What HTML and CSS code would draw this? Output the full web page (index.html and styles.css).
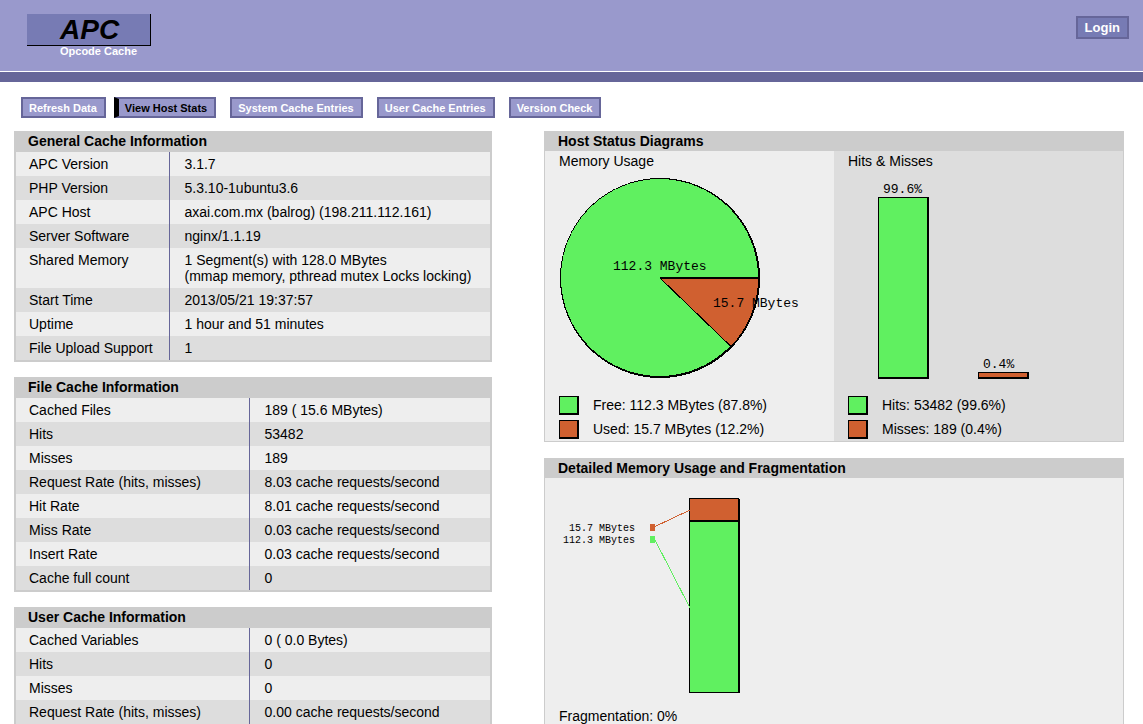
FILE: index.html
```html
<!DOCTYPE html>
<html lang="en">
<head>
<meta charset="utf-8">
<title>APC Opcode Cache</title>
<link rel="stylesheet" href="styles.css">
</head>
<body>
<header class="head">
  <div class="brand">
    <h1 class="logo">APC</h1>
    <div class="tagline">Opcode Cache</div>
  </div>
  <button class="login" type="button">Login</button>
</header>
<nav class="menu">
  <a class="tab" href="#refresh">Refresh Data</a>
  <a class="tab tab-active" href="#host">View Host Stats</a>
  <a class="tab" href="#system">System Cache Entries</a>
  <a class="tab" href="#user">User Cache Entries</a>
  <a class="tab" href="#version">Version Check</a>
</nav>
<main class="content">
  <div class="column info-column">
    <section class="info">
      <h2 class="title">General Cache Information</h2>
      <table class="facts facts-narrow">
        <tr><th scope="row">APC Version</th><td>3.1.7</td></tr>
        <tr><th scope="row">PHP Version</th><td>5.3.10-1ubuntu3.6</td></tr>
        <tr><th scope="row">APC Host</th><td>axai.com.mx (balrog) (198.211.112.161)</td></tr>
        <tr><th scope="row">Server Software</th><td>nginx/1.1.19</td></tr>
        <tr><th scope="row">Shared Memory</th><td>1 Segment(s) with 128.0 MBytes<br>(mmap memory, pthread mutex Locks locking)</td></tr>
        <tr><th scope="row">Start Time</th><td>2013/05/21 19:37:57</td></tr>
        <tr><th scope="row">Uptime</th><td>1 hour and 51 minutes</td></tr>
        <tr><th scope="row">File Upload Support</th><td>1</td></tr>
      </table>
    </section>
    <section class="info">
      <h2 class="title">File Cache Information</h2>
      <table class="facts">
        <tr><th scope="row">Cached Files</th><td>189 ( 15.6 MBytes)</td></tr>
        <tr><th scope="row">Hits</th><td>53482</td></tr>
        <tr><th scope="row">Misses</th><td>189</td></tr>
        <tr><th scope="row">Request Rate (hits, misses)</th><td>8.03 cache requests/second</td></tr>
        <tr><th scope="row">Hit Rate</th><td>8.01 cache requests/second</td></tr>
        <tr><th scope="row">Miss Rate</th><td>0.03 cache requests/second</td></tr>
        <tr><th scope="row">Insert Rate</th><td>0.03 cache requests/second</td></tr>
        <tr><th scope="row">Cache full count</th><td>0</td></tr>
      </table>
    </section>
    <section class="info">
      <h2 class="title">User Cache Information</h2>
      <table class="facts">
        <tr><th scope="row">Cached Variables</th><td>0 ( 0.0 Bytes)</td></tr>
        <tr><th scope="row">Hits</th><td>0</td></tr>
        <tr><th scope="row">Misses</th><td>0</td></tr>
        <tr><th scope="row">Request Rate (hits, misses)</th><td>0.00 cache requests/second</td></tr>
      </table>
    </section>
  </div>
  <div class="column graph-column">
    <section class="graph">
      <h2 class="title">Host Status Diagrams</h2>
      <div class="halves">
        <div class="half">
          <div class="caption">Memory Usage</div>
          <svg class="chart" width="260" height="221" viewBox="0 0 260 221" role="img" aria-label="Memory usage pie chart">
            <circle cx="101" cy="106" r="100" fill="#000"/>
            <circle cx="100.5" cy="105.5" r="98.5" fill="#60f060"/>
            <path d="M101 106H199A98.5 98.5 0 0 1 171.500 174.500Z" fill="#d06030"/>
            <path d="M101 106L172.500 175" stroke="#000" fill="none"/>
            <path d="M101 106H201" stroke="#000" stroke-width="2"/>
            <text class="pixel" x="54" y="98">112.3 MBytes</text>
            <text class="pixel" x="154" y="135">15.7 MBytes</text>
          </svg>
          <div class="legend"><span class="swatch free"></span>Free: 112.3 MBytes (87.8%)</div>
          <div class="legend"><span class="swatch used"></span>Used: 15.7 MBytes (12.2%)</div>
        </div>
        <div class="half half-dark">
          <div class="caption">Hits &amp; Misses</div>
          <svg class="chart" width="260" height="221" viewBox="0 0 260 221" role="img" aria-label="Hits and misses bar chart">
            <path d="M30 25h51v182h-51z"/>
            <path d="M31 26h48v179h-48z" fill="#60f060"/>
            <path d="M130 200h51v7h-51z"/>
            <path d="M131 201h48v4h-48z" fill="#d06030"/>
            <text class="pixel" x="35" y="21">99.6%</text>
            <text class="pixel" x="135" y="196">0.4%</text>
          </svg>
          <div class="legend"><span class="swatch free"></span>Hits: 53482 (99.6%)</div>
          <div class="legend"><span class="swatch used"></span>Misses: 189 (0.4%)</div>
        </div>
      </div>
    </section>
    <section class="graph graph-last">
      <h2 class="title">Detailed Memory Usage and Fragmentation</h2>
      <div class="half">
        <svg class="chart" width="260" height="230" viewBox="0 0 260 230" role="img" aria-label="Memory segments">
          <path d="M130 20h50v1h1v194h-51z"/>
          <path d="M131 21h48v21h-48zM91 46h5v7h-5z" fill="#d06030"/>
          <path d="M131 44h48v170h-48zM91 58h5v7h-5z" fill="#60f060"/>
          <path d="M95 49L131 32" stroke="#d06030"/>
          <path d="M95 60L131 130" stroke="#60f060"/>
          <text class="pixel-small" x="10" y="53">15.7 MBytes</text>
          <text class="pixel-small" x="4" y="65">112.3 MBytes</text>
        </svg>
        <div class="fragmentation">Fragmentation: 0%</div>
      </div>
    </section>
  </div>
</main>
</body>
</html>
```
FILE: styles.css
```css
* { box-sizing: border-box; }
body {
  margin: 0;
  height: 100vh;
  overflow: hidden;
  display: flex;
  flex-direction: column;
  background: #fff;
  color: #000;
  font: 14px/16px "Liberation Sans", Arial, sans-serif;
}
.head {
  flex: none;
  display: flex;
  justify-content: space-between;
  align-items: flex-start;
  height: 82px;
  padding: 14px 14px 0 27px;
  background: linear-gradient(#99c 71px, #fff 71px, #fff 72px, #669 72px);
}
.logo {
  margin: 0;
  width: 124px;
  padding-left: 33px;
  background: #777bb4;
  border: solid #000;
  border-width: 0 1px 1px 0;
  font-size: 28px;
  line-height: 31px;
  font-style: italic;
}
.tagline {
  padding-left: 33px;
  color: #fff;
  font-size: 11px;
  line-height: 10px;
  font-weight: bold;
}
.login {
  margin-top: 2px;
  padding: 2px 7px 1px;
  background: #777bb4;
  border: 2px solid #669;
  color: #fff;
  font: bold 13px/16px "Liberation Sans", Arial, sans-serif;
}
.menu {
  flex: none;
  display: flex;
  gap: 14px;
  padding: 15px 21px 13px;
}
.tab {
  padding: 1px 7px 0 6px;
  background: #99c;
  border: 2px solid #669;
  color: #fff;
  font-size: 11px;
  line-height: 16px;
  font-weight: bold;
  text-decoration: none;
  white-space: nowrap;
}
.tab-active {
  margin-left: -6px;
  border-left: 5px solid #000;
  color: #000;
}
.content {
  flex: 1;
  min-height: 0;
  display: grid;
  grid-template-columns: 478fr 580fr;
  column-gap: 52px;
  padding: 0 19px 0 14px;
}
.column {
  min-width: 0;
  display: flex;
  flex-direction: column;
}
.info-column { gap: 15px; }
.graph-column { gap: 16px; }
.info {
  flex: none;
  border: 2px solid #ccc;
  border-top: 0;
}
.title {
  margin: 0;
  padding: 2px 12px;
  background: #ccc;
  font-size: 14px;
  line-height: 17px;
}
.facts {
  width: 100%;
  border-collapse: collapse;
}
.facts tr { background: #eee; }
.facts tr:nth-child(even) { background: #ddd; }
.facts th, .facts td {
  padding: 4px 15px;
  text-align: left;
  vertical-align: top;
  font-weight: normal;
}
.facts th {
  width: 233px;
  padding: 4px 13px;
  border-right: 1px solid #669;
  white-space: nowrap;
}
.facts-narrow th { width: 153px; }
.graph {
  flex: none;
  border: 1px solid #ccc;
  border-top: 0;
}
.graph-last {
  flex: 1 0 auto;
  border-bottom: 0;
  background: #eee;
}
.graph .title {
  padding: 2px 13px;
  line-height: 16px;
}
.halves {
  display: grid;
  grid-template-columns: 1fr 1fr;
}
.half {
  padding: 0 14px;
  background: #eee;
}
.half-dark { background: #ddd; }
.caption { line-height: 21px; }
.chart {
  display: block;
  shape-rendering: crispEdges;
}
.pixel, .pixel-small {
  font-family: "Liberation Mono", monospace;
  font-size: 13px;
}
.pixel-small { font-size: 10px; }
.legend {
  display: flex;
  align-items: center;
  gap: 14px;
  height: 24px;
}
.swatch {
  width: 20px;
  height: 19px;
  border: solid #000;
  border-width: 1px 2px 2px 1px;
}
.free { background: #60f060; }
.used { background: #d06030; }
.fragmentation { line-height: 16px; }
```
